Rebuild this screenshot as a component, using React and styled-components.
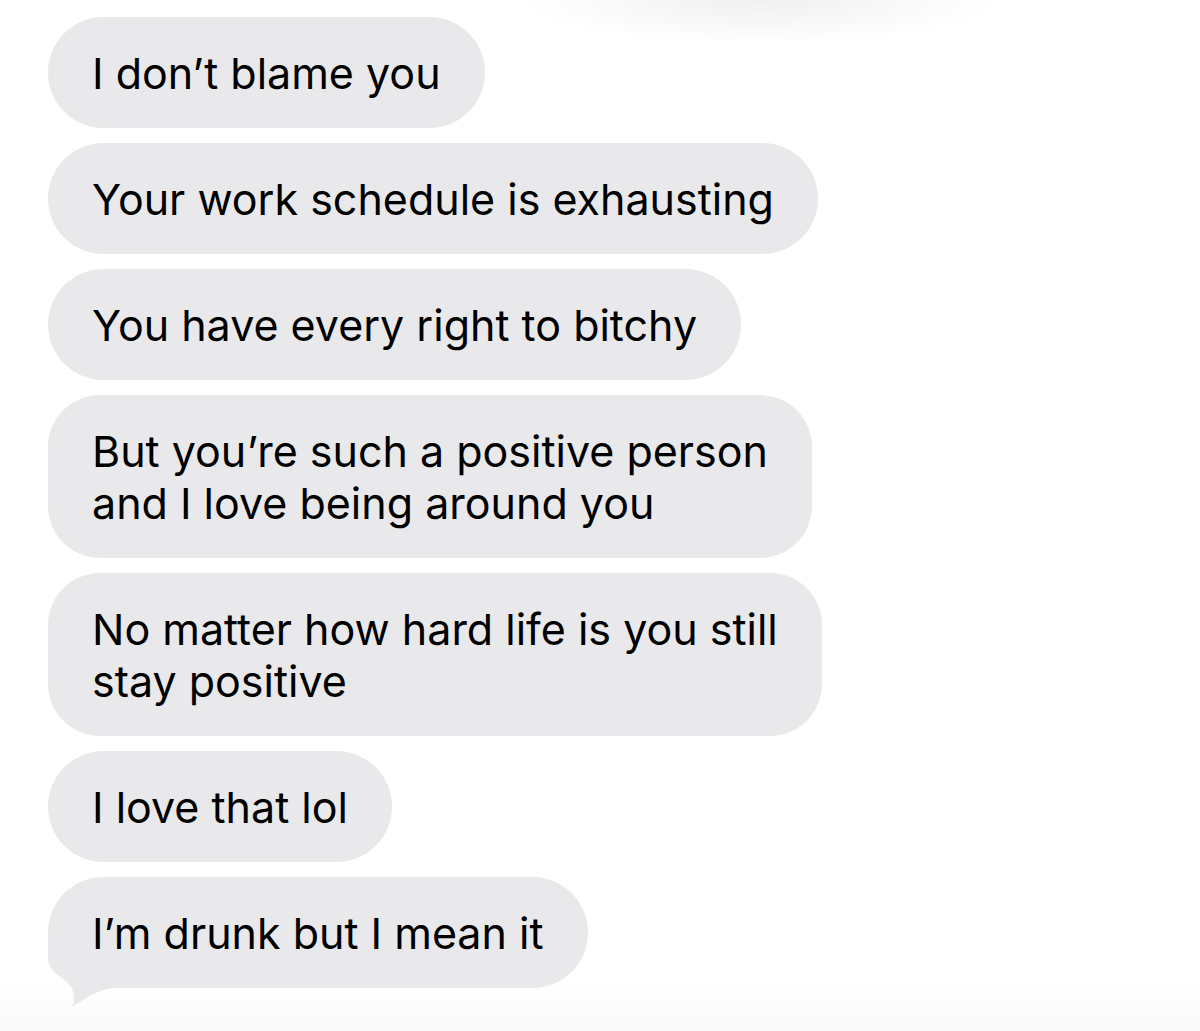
import React from "react";
import styled, { createGlobalStyle } from "styled-components";

const Global = createGlobalStyle`
  html, body { margin: 0; padding: 0; background: #ffffff; }
  body { font-family: Inter, "Liberation Sans", sans-serif; }
`;

const Page = styled.div`
  position: relative;
  width: 1200px;
  height: 1031px;
  overflow: hidden;
  background:
    radial-gradient(ellipse 240px 45px at 760px 0px, rgba(0,0,0,0.06), rgba(0,0,0,0) 100%),
    linear-gradient(to bottom, #ffffff 0%, #ffffff 95%, #f9f9f9 100%);
  box-sizing: border-box;
  padding: 17px 0 0 48px;
  display: flex;
  flex-direction: column;
  align-items: flex-start;
  gap: 15px;
`;

const Bubble = styled.div`
  position: relative;
  background: #e9e9eb;
  color: #000;
  font-size: 43px;
  line-height: 52px;
  padding: 29.5px 44px;
  border-radius: ${(p) => (p.$multi ? "52px" : "56px")};
  letter-spacing: 0;
  box-sizing: border-box;
  white-space: nowrap;
`;

const Line = styled.div`
  position: relative;
  z-index: 1;
`;

const Tail = styled.svg`
  position: absolute;
  z-index: 0;
  left: 0;
  bottom: -24px;
  width: 80px;
  height: 80px;
`;

const messages = [
  ["I don\u2019t blame you"],
  ["Your work schedule is exhausting"],
  ["You have every right to bitchy"],
  ["But you\u2019re such a positive person", "and I love being around you"],
  ["No matter how hard life is you still", "stay positive"],
  ["I love that lol"],
  ["I\u2019m drunk but I mean it"],
];

export default function App() {
  return (
    <>
      <Global />
      <Page>
        {messages.map((lines, i) => (
          <Bubble key={i} $multi={lines.length > 1}>
            {i === messages.length - 1 && (
              <Tail viewBox="0 0 80 80">
                <path
                  d="M0 0 L0 27 C 0 36, 8 42, 14 46 C 22 52, 26 58, 26 66 C 26 70, 25 73, 23 75 C 32 72, 44 58, 66 56 L 66 0 Z"
                  fill="#e9e9eb"
                />
              </Tail>
            )}
            {lines.map((l, j) => (
              <Line key={j}>{l}</Line>
            ))}
          </Bubble>
        ))}
      </Page>
    </>
  );
}
